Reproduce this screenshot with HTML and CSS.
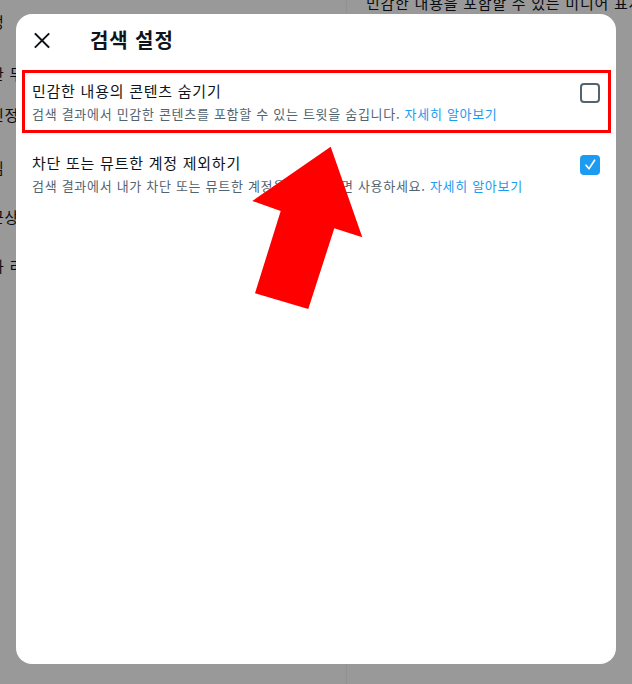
FILE: index.html
```html
<!DOCTYPE html>
<html lang="ko">
<head>
<meta charset="utf-8">
<title>검색 설정</title>
<link rel="stylesheet" href="styles.css">
</head>
<body>
<div class="page">
  <div class="bg">
    <div class="bg-left">
      <div class="frag">정</div>
      <div class="frag">한 무엇</div>
      <div class="frag">인정</div>
      <div class="frag">님</div>
      <div class="frag">근상</div>
      <div class="frag">하 리</div>
    </div>
    <div class="bg-right">
      <div class="bg-head">민감한 내용을 포함할 수 있는 미디어 표시</div>
    </div>
  </div>
  <div class="overlay"></div>
  <div class="modal">
    <div class="modal-header">
      <button class="close" type="button" aria-label="닫기">
        <svg viewBox="0 0 20 20" width="20" height="20"><path d="M3.5 4 L16.5 17 M16.5 4 L3.5 17" stroke="#0f1419" stroke-width="1.9" stroke-linecap="square" fill="none"/></svg>
      </button>
      <h2 class="modal-title">검색 설정</h2>
    </div>
    <div class="setting">
      <div class="setting-text">
        <div class="setting-title">민감한 내용의 콘텐츠 숨기기</div>
        <div class="setting-desc">검색 결과에서 민감한 콘텐츠를 포함할 수 있는 트윗을 숨깁니다. <a class="link" href="#">자세히 알아보기</a></div>
      </div>
      <span class="checkbox"></span>
    </div>
    <div class="setting">
      <div class="setting-text">
        <div class="setting-title">차단 또는 뮤트한 계정 제외하기</div>
        <div class="setting-desc">검색 결과에서 내가 차단 또는 뮤트한 계정을 제외하려면 사용하세요. <a class="link" href="#">자세히 알아보기</a></div>
      </div>
      <span class="checkbox checked">
        <svg viewBox="0 0 20 20" width="20" height="20"><path d="M6 10.2 L9 13.8 L14.6 5.2" stroke="#fff" stroke-width="1.6" fill="none" stroke-linecap="round" stroke-linejoin="round"/></svg>
      </span>
    </div>
  </div>
  <div class="highlight"></div>
  <svg class="arrow" viewBox="0 0 632 684" width="632" height="684">
    <polygon points="330.7,146.7 362.3,237.3 334.3,228.3 308.3,309 255,293.3 280.7,211 252.3,201" fill="#ff0000"/>
  </svg>
</div>
</body>
</html>
```

FILE: styles.css
```css
* { box-sizing: border-box; }

html, body {
  margin: 0;
  padding: 0;
  width: 632px;
  height: 684px;
  overflow: hidden;
  background: #ffffff;
  font-family: "Noto Sans CJK KR", "Noto Sans", sans-serif;
  color: #0f1419;
}

.page {
  position: relative;
  width: 632px;
  height: 684px;
  overflow: hidden;
}

.bg {
  display: flex;
  height: 684px;
}

.bg-left {
  width: 357px;
  margin-left: -10px;
  border-right: 1px solid #eff3f4;
  padding-top: 12px;
  font-size: 15px;
  line-height: 20px;
  letter-spacing: 0.75px;
  white-space: nowrap;
}

.frag:nth-child(2) { margin-top: 32px; }
.frag:nth-child(3) { margin-top: 21px; }
.frag:nth-child(4) { margin-top: 33px; }
.frag:nth-child(5) { margin-top: 29px; }
.frag:nth-child(6) { margin-top: 29px; }

.bg-right {
  flex: 1;
  padding-left: 19px;
  white-space: nowrap;
  overflow: hidden;
}

.bg-head {
  margin-top: -7px;
  font-size: 15px;
  line-height: 20px;
  letter-spacing: 0.75px;
}

.overlay {
  position: absolute;
  inset: 0;
  background: rgba(0, 0, 0, 0.4);
}

.modal {
  position: absolute;
  left: 16px;
  top: 14px;
  width: 600px;
  height: 650px;
  background: #ffffff;
  border-radius: 16px;
  display: flex;
  flex-direction: column;
}

.modal-header {
  height: 52px;
  display: flex;
  align-items: center;
  padding: 0 16px;
}

.close {
  width: 20px;
  height: 20px;
  padding: 0;
  margin: 0;
  border: 0;
  background: none;
  display: flex;
}

.modal-title {
  margin: 0 0 0 38px;
  font-size: 20px;
  line-height: 24px;
  font-weight: 700;
  letter-spacing: 0.9px;
  color: #0f1419;
}

.setting {
  display: flex;
  align-items: flex-start;
  justify-content: space-between;
  padding: 15px 16px 16px;
}

.setting-title {
  font-size: 15px;
  line-height: 20px;
  letter-spacing: 0.75px;
  color: #0f1419;
}

.setting-desc {
  margin-top: 5px;
  font-size: 13px;
  line-height: 16px;
  letter-spacing: 0.7px;
  color: #536471;
}

.link {
  color: #1d9bf0;
  text-decoration: none;
}

.checkbox {
  flex: none;
  width: 20px;
  height: 20px;
  margin-top: 2px;
  border: 2px solid #536471;
  border-radius: 4px;
  display: flex;
  align-items: center;
  justify-content: center;
}

.checkbox.checked {
  border: 0;
  background: #1d9bf0;
}

.highlight {
  position: absolute;
  left: 22px;
  top: 70px;
  width: 589px;
  height: 63px;
  border: 3px solid #ff0000;
}

.arrow {
  position: absolute;
  left: 0;
  top: 0;
}
```
